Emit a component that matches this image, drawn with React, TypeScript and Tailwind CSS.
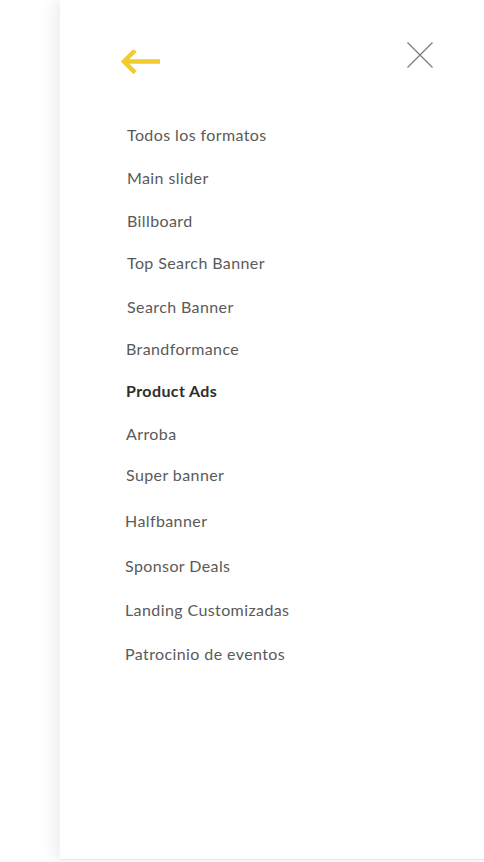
import { X } from "lucide-react";

const ITEMS = [
  { label: "Todos los formatos", cls: "h-[43px] pl-[127px]" },
  { label: "Main slider", cls: "h-[43px] pl-[127px]" },
  { label: "Billboard", cls: "h-[42px] pl-[127px]" },
  { label: "Top Search Banner", cls: "h-[44px] pl-[127px]" },
  { label: "Search Banner", cls: "h-[42px] pl-[127px]" },
  { label: "Brandformance", cls: "h-[42px] pl-[126px]" },
  { label: "Product Ads", cls: "h-[43px] pl-[126px]", active: true },
  { label: "Arroba", cls: "h-[41px] pl-[126px]" },
  { label: "Super banner", cls: "h-[46px] pl-[126px]" },
  { label: "Halfbanner", cls: "h-[45px] pl-[125px]" },
  { label: "Sponsor Deals", cls: "h-[44px] pl-[125px]" },
  { label: "Landing Customizadas", cls: "h-[44px] pl-[125px]" },
  { label: "Patrocinio de eventos", cls: "h-[44px] pl-[125px]" },
];

export default function App() {
  return (
    <div className="w-[484px] h-[862px] bg-white overflow-hidden flex" style={{ fontFamily: "Lato, 'Open Sans', sans-serif" }}>
      <div className="w-[60px] shrink-0" />
      <aside className="flex-1 h-[860px] bg-white shadow-[-6px_0_14px_rgba(0,0,0,0.07)] border-b border-[#e6e6e6] flex flex-col">
        <header className="flex items-start justify-between pt-[42px] pr-[51px] pl-[61px]">
          <button type="button" aria-label="Volver" className="mt-[8px]">
            <svg width="40" height="24" viewBox="0 0 40 24" fill="none">
              <path d="M39 11.5H4" stroke="#f2cb2f" strokeWidth="4.5" />
              <path d="M12.5 2L3 11.5L12.5 21" stroke="#f2cb2f" strokeWidth="4.5" strokeLinecap="square" />
            </svg>
          </button>
          <button type="button" aria-label="Cerrar">
            <svg width="26" height="26" viewBox="0 0 26 26" fill="none">
              <path d="M0.5 0.5L25.5 25.5M25.5 0.5L0.5 25.5" stroke="#7a7a7a" strokeWidth="1.2" />
            </svg>
          </button>
        </header>
        <nav className="mt-[51px] -ml-[60px]">
          {ITEMS.map((it) => (
            <div key={it.label} className={`${it.cls} flex items-start`}>
              <a
                href="#"
                className={`text-[16px] leading-[20px] tracking-[0.4px] ${it.active ? "font-bold text-[#2e2e2e]" : "text-[#5a5a5a]"}`}
              >
                {it.label}
              </a>
            </div>
          ))}
        </nav>
      </aside>
    </div>
  );
}
